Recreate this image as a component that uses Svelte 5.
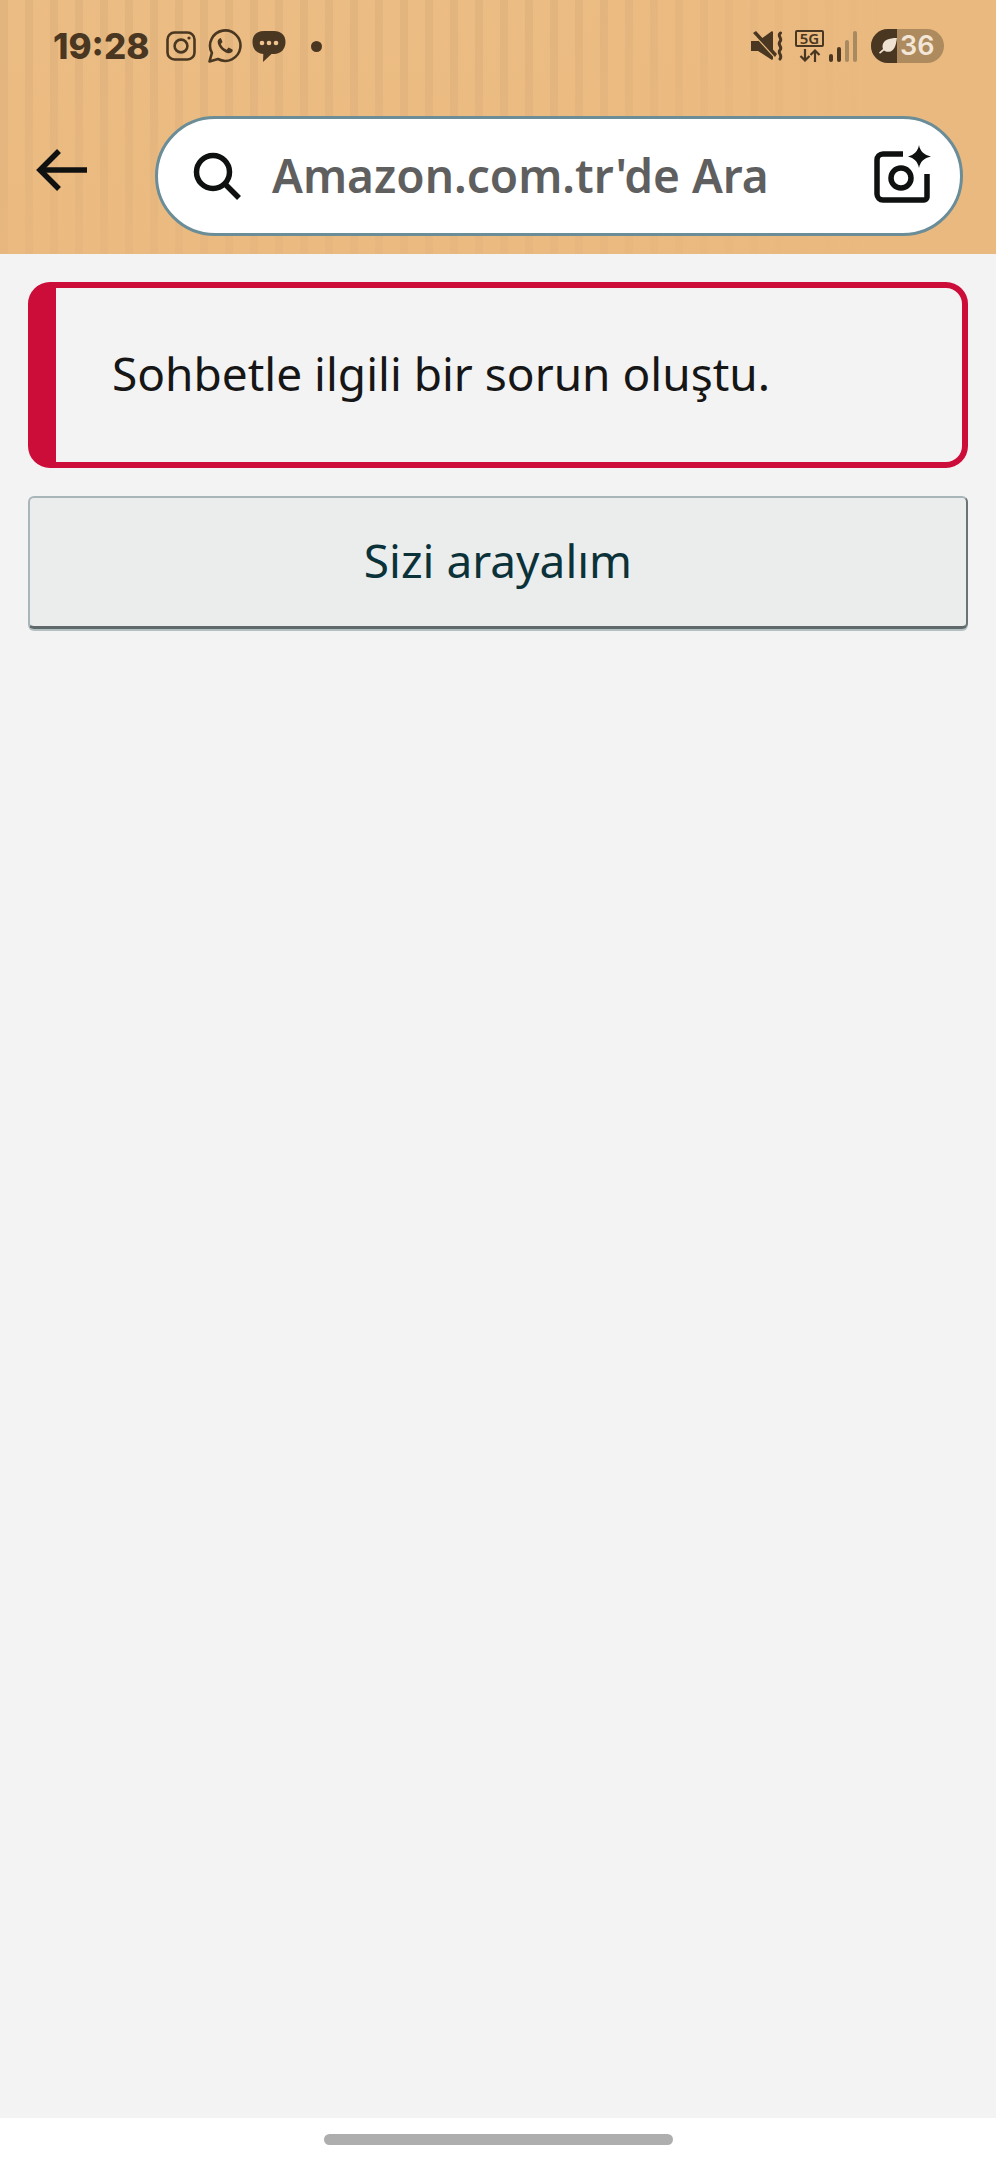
<script>
	const query = "Amazon.com.tr'de Ara";
	const errorText = 'Sohbetle ilgili bir sorun oluştu.';
	const buttonText = 'Sizi arayalım';
</script>

<div class="page">
	<header class="header">
		<div class="status">
			<span class="time">19:28</span>
			<div class="notifs">
				<svg width="30" height="30" viewBox="0 0 30 30" fill="none" stroke="#4a3722" stroke-width="2.6">
					<rect x="1.5" y="1.5" width="27" height="27" rx="7" />
					<circle cx="15" cy="15" r="6.4" />
					<circle cx="23" cy="7" r="1.6" fill="#4a3722" stroke="none" />
				</svg>
				<svg class="wa" width="34" height="34" viewBox="0 0 34 34" fill="none">
					<path d="M1.5 32.5l2.4-8.6A15.2 15.2 0 1 1 10 30z" stroke="#4a3722" stroke-width="2.6" stroke-linejoin="round" />
					<path d="M12 9.2c-1.6.6-2.8 2.6-2.2 5 1 4.200 5.600 9 10.200 10 2.300.4 4.200-.8 4.700-2.400l-.2-1.300-3.900-1.900-1.900 2.100c-2.600-1-4.900-3.300-5.900-5.800l1.700-2-1.600-3.800z" fill="#4a3722" />
				</svg>
				<svg class="msg" width="34" height="33" viewBox="0 0 34 33">
					<path d="M12 1h10c7 0 11.500 4 11.500 11s-4.500 12-11.500 12h-2.500L11 32l.3-8C4.500 23.500.5 19 .5 12S5 1 12 1z" fill="#4a3722" />
					<circle cx="10" cy="13" r="2.300" fill="#f0c48f" />
					<circle cx="17" cy="13" r="2.300" fill="#f0c48f" />
					<circle cx="24" cy="13" r="2.300" fill="#f0c48f" />
				</svg>
				<span class="dot"></span>
			</div>
			<div class="sys">
				<svg width="33" height="30" viewBox="0 0 33 30" fill="#4a3722">
					<path d="M0 10h7L21 0l1 1v27l-1 1L7 20H0z" />
					<path d="M3 3l21 23" stroke="#eab97f" stroke-width="2.500" />
					<path d="M5 0l21 23-2 3L2 2z" />
					<path d="M29.500 2c-4 3 2.500 5-.5 8.500s3 5.500 0 8.500 3 5 0 9" fill="none" stroke="#4a3722" stroke-width="3" stroke-linecap="round" />
				</svg>
				<div class="net">
					<span class="fiveg">5G</span>
					<svg width="22" height="13" viewBox="0 0 22 13" fill="none" stroke="#4a3722" stroke-width="2.200">
						<path d="M6 0v11M1.500 7L6 11.500 10.500 7" />
						<path d="M16 13V2M11.500 6L16 1.500 20.500 6" />
					</svg>
				</div>
				<svg class="signal" width="29" height="31" viewBox="0 0 29 31">
					<rect x="0" y="23" width="4" height="8" rx="2" fill="#4a3722" />
					<rect x="8" y="16" width="4" height="15" rx="2" fill="#4a3722" />
					<rect x="16" y="9" width="4" height="22" rx="2" fill="#a98a60" />
					<rect x="24" y="0" width="4" height="31" rx="2" fill="#a98a60" />
				</svg>
				<div class="battery">
					<span class="batt-fill">
						<svg width="18" height="16" viewBox="0 0 18 16">
							<path d="M18 0C10 0 4 2 3.500 8c0 1 .1 2 .5 3L0 14.500l1 1.300 4-3.300c1.500 1 3 1.500 5 1.300 5-.5 7-6 8-14z" fill="#f0e2d0" />
						</svg>
					</span>
					<span class="batt-num">36</span>
				</div>
			</div>
		</div>
		<div class="nav">
			<svg class="back" width="52" height="42" viewBox="0 0 52 42" fill="none" stroke="#0f1111" stroke-width="5.500">
				<path d="M52 21H5" />
				<path d="M24 2L5 21l19 19" />
			</svg>
			<div class="search">
				<svg width="48" height="49" viewBox="0 0 48 49" fill="none" stroke="#0f1111" stroke-width="5.500">
					<circle cx="20" cy="20" r="16.500" />
					<path d="M32 32l14 14" />
				</svg>
				<span class="query">{query}</span>
				<svg class="lens" width="58" height="58" viewBox="0 0 58 58" fill="none" stroke="#0f1111" stroke-width="5.500">
					<path d="M29 9H9a6 6 0 0 0-6 6v34a6 6 0 0 0 6 6h41a3 3 0 0 0 3-3V29" />
					<circle cx="27" cy="33" r="10" />
					<path d="M45 0c1 6 5 10 12 11.500-7 1.500-11 5.500-12 11.500-1-6-5-10-11-11.500C40 10 44 6 45 0z" fill="#0f1111" stroke="none" />
				</svg>
			</div>
		</div>
	</header>

	<main class="content">
		<div class="alert">
			<p>{errorText}</p>
		</div>
		<button class="call">{buttonText}</button>
	</main>

	<footer class="gesture">
		<span class="handle"></span>
	</footer>
</div>

<style>
	:global(body) {
		margin: 0;
		background: #f3f3f3;
	}

	.page {
		height: 2160px;
		display: flex;
		flex-direction: column;
		font-family: 'Noto Sans', 'Open Sans', sans-serif;
	}

	.header {
		height: 254px;
		box-sizing: border-box;
		background:
			linear-gradient(90deg, rgba(234, 185, 127, 0) 0%, rgba(234, 185, 127, 0) 55%, #eab97f 90%),
			linear-gradient(180deg, rgba(234, 185, 127, 0) 0%, rgba(234, 185, 127, 0.6) 100%),
			repeating-linear-gradient(90deg, #e2b47e 0 8px, #ebbc83 8px 25px);
	}

	.status {
		height: 92px;
		display: flex;
		align-items: center;
		padding: 0 52px 0 53px;
		color: #4a3722;
	}

	.time {
		font-family: Inter, sans-serif;
		font-weight: 800;
		font-size: 35px;
		line-height: 1;
		width: 113px;
	}

	.notifs {
		display: flex;
		align-items: center;
		gap: 12px;
	}

	.notifs .msg {
		margin-left: -2px;
	}

	.dot {
		width: 11px;
		height: 11px;
		border-radius: 50%;
		background: #4a3722;
		margin-left: 13px;
	}

	.sys {
		display: flex;
		align-items: center;
		margin-left: auto;
	}

	.net {
		display: flex;
		flex-direction: column;
		align-items: center;
		gap: 2px;
		margin: 0 5px 0 11px;
	}

	.fiveg {
		width: 29px;
		height: 17px;
		box-sizing: border-box;
		border: 2px solid #4a3722;
		border-radius: 2px;
		font-size: 15px;
		font-weight: 600;
		line-height: 13px;
		text-align: center;
	}

	.battery {
		display: flex;
		width: 73px;
		height: 34px;
		margin-left: 13px;
		border-radius: 17px;
		overflow: hidden;
		background: #ad8b5f;
	}

	.batt-fill {
		width: 26px;
		display: flex;
		align-items: center;
		justify-content: flex-end;
		background: #4a3722;
	}

	.batt-num {
		font-family: Inter, sans-serif;
		font-size: 27px;
		font-weight: 600;
		line-height: 34px;
		color: #f3e6d6;
		margin-left: 3px;
	}

	.nav {
		display: flex;
		align-items: center;
		gap: 68px;
		padding: 24px 33px 18px 35px;
	}

	.back {
		flex-shrink: 0;
		margin-top: -12px;
	}

	.search {
		flex: 1;
		height: 120px;
		box-sizing: border-box;
		display: flex;
		align-items: center;
		gap: 31px;
		padding: 0 28px 0 35px;
		background: #fff;
		border: 3px solid #6a8d98;
		border-radius: 60px;
	}

	.query {
		font-size: 46px;
		font-weight: 600;
		line-height: 1;
		margin-top: -2px;
		color: #5f5f5f;
		white-space: nowrap;
	}

	.lens {
		margin-left: auto;
		margin-top: -4px;
	}

	.content {
		flex: 1;
		display: flex;
		flex-direction: column;
		gap: 28px;
		padding: 28px;
	}

	.alert {
		height: 186px;
		box-sizing: border-box;
		display: flex;
		align-items: center;
		padding: 0 0 4px 56px;
		border: 6px solid #cc0c39;
		border-left-width: 28px;
		border-radius: 22px;
	}

	.alert p {
		margin: 0;
		font-size: 46px;
		color: #161616;
	}

	.call {
		height: 133px;
		padding: 0 0 4px;
		border: 2px solid #a9b6b9;
		border-right-color: #6a7476;
		border-bottom: 3px solid #5f696c;
		border-radius: 6px;
		background: #ebeded;
		box-shadow: 0 2px 0 #b5c0c2;
		font-family: inherit;
		font-size: 46px;
		color: #0b3239;
	}

	.gesture {
		height: 42px;
		display: flex;
		justify-content: center;
		background: #fff;
	}

	.handle {
		width: 349px;
		height: 11px;
		margin-top: 16px;
		border-radius: 6px;
		background: #aeaeae;
	}
</style>
